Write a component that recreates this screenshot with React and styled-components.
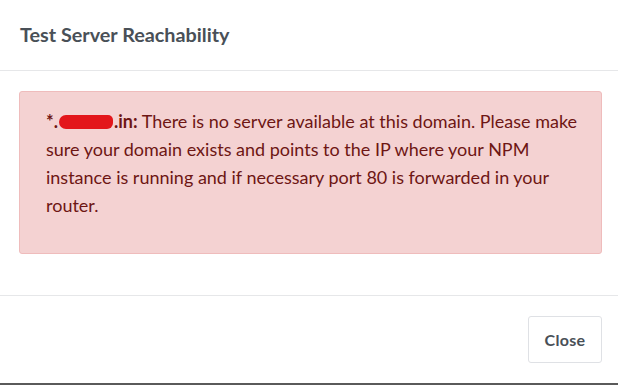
import styled, { createGlobalStyle } from "styled-components";

const Global = createGlobalStyle`
  html, body {
    margin: 0;
    padding: 0;
    background: #ffffff;
  }
  body {
    font-family: Lato, "Noto Sans", "Liberation Sans", sans-serif;
  }
`;

const Modal = styled.div`
  width: 618px;
  height: 385px;
  box-sizing: border-box;
  display: flex;
  flex-direction: column;
  background: #fff;
  border-bottom: 2px solid #5a5a5a;
`;

const Header = styled.div`
  height: 71px;
  box-sizing: border-box;
  display: flex;
  align-items: center;
  padding: 0 20px 2px;
  border-bottom: 1px solid #e6e7e9;
`;

const Title = styled.h3`
  margin: 0;
  font-size: 19.8px;
  font-weight: 700;
  color: #495057;
`;

const Body = styled.div`
  flex: 1;
  padding: 20px 16px 0 19px;
  border-bottom: 1px solid #e6e7e9;
`;

const Alert = styled.div`
  height: 163px;
  box-sizing: border-box;
  padding: 15px 10px 0 26px;
  background: #f4d2d2;
  border: 1px solid #efbcbc;
  border-radius: 3px;
  color: #6e1614;
  font-size: 18px;
  line-height: 28px;
`;

const Domain = styled.b`
  font-weight: 700;
`;

const Redacted = styled.span`
  display: inline-block;
  width: 54px;
  height: 14px;
  margin: 0 1px;
  vertical-align: -1px;
  background: #e3161b;
  border-radius: 7px 5px 6px 7px;
`;

const Footer = styled.div`
  height: 87px;
  box-sizing: border-box;
  display: flex;
  justify-content: flex-end;
  align-items: center;
  padding: 0 16px 0 0;
`;

const Button = styled.button`
  width: 74px;
  height: 47px;
  background: #fff;
  border: 1px solid #dfe1e5;
  border-radius: 3px;
  color: #495057;
  font-family: inherit;
  font-size: 16px;
  font-weight: 700;
  letter-spacing: 0.3px;
  cursor: pointer;
`;

export default function App() {
  return (
    <>
      <Global />
      <Modal>
        <Header>
          <Title>Test Server Reachability</Title>
        </Header>
        <Body>
          <Alert>
            <Domain>
              *.<Redacted />.in:
            </Domain>{" "}
            There is no server available at this domain. Please make
            <br />
            sure your domain exists and points to the IP where your NPM
            <br />
            instance is running and if necessary port 80 is forwarded in your
            <br />
            router.
          </Alert>
        </Body>
        <Footer>
          <Button>Close</Button>
        </Footer>
      </Modal>
    </>
  );
}
